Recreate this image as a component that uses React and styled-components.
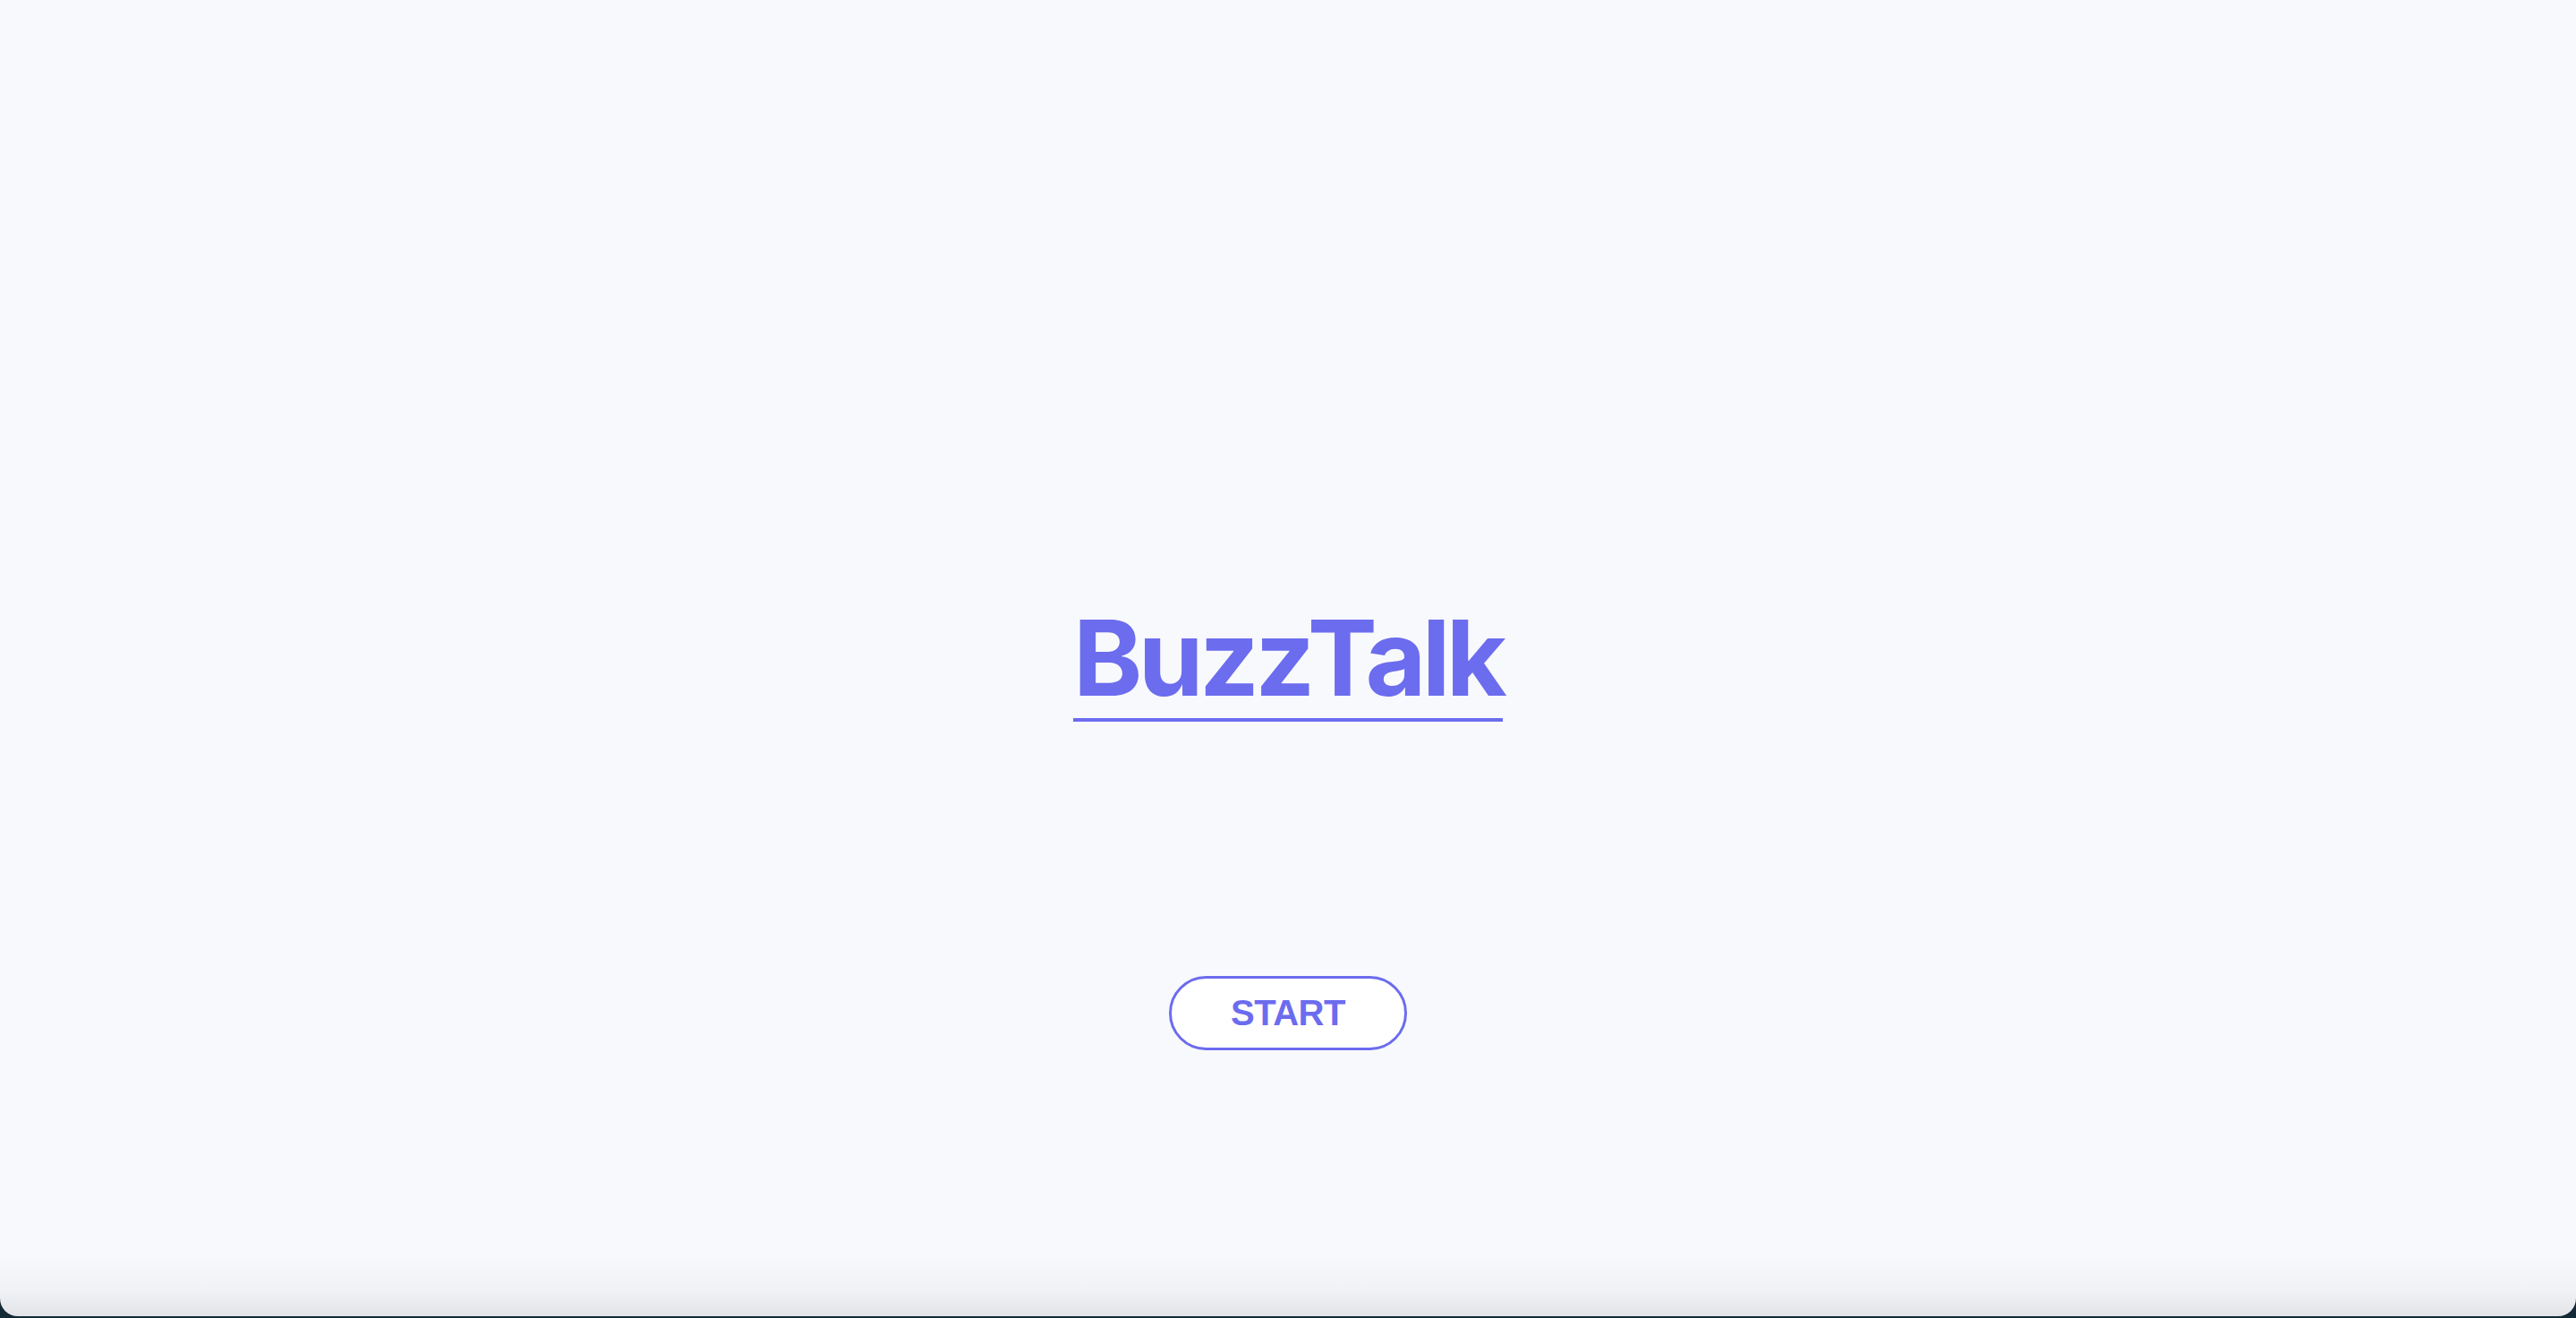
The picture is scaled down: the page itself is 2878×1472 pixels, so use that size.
import React from "react";
import styled, { createGlobalStyle } from "styled-components";

const GlobalStyle = createGlobalStyle`
  html, body {
    margin: 0;
    padding: 0;
    background: #15303d;
  }
  * {
    box-sizing: border-box;
  }
`;

const Frame = styled.div`
  height: 1472px;
  background: #132a36;
  overflow: hidden;
`;

// bottom fades to grey like the reference's window edge
const Panel = styled.main`
  height: 1470px;
  background: linear-gradient(
    to bottom,
    #f8f9fd 0,
    #f8f9fd calc(100% - 70px),
    #f1f2f5 calc(100% - 30px),
    #e3e4e8 100%
  );
  border-radius: 0 0 20px 20px;
  display: flex;
  flex-direction: column;
  align-items: center;
  padding-top: 676px;
`;

const Title = styled.h1`
  margin: 0;
  font-family: Inter, "Liberation Sans", sans-serif;
  font-weight: 700;
  font-size: 117px;
  line-height: 117px;
  letter-spacing: -0.04em;
  color: #6c6cef;
  padding: 0 0 9px 0;
  border-bottom: 4px solid #6c6cef;
`;

const StartButton = styled.button`
  margin-top: 284px;
  width: 266px;
  height: 83px;
  border-radius: 42px;
  border: 3.5px solid #6c6cef;
  background: #ffffff;
  color: #6c6cef;
  font-family: "Liberation Sans", Arial, sans-serif;
  font-weight: 700;
  font-size: 40px;
  letter-spacing: -0.5px;
  cursor: pointer;
  padding: 0;
`;

export default function App() {
  return (
    <>
      <GlobalStyle />
      <Frame>
        <Panel>
          <Title>BuzzTalk</Title>
          <StartButton>START</StartButton>
        </Panel>
      </Frame>
    </>
  );
}
